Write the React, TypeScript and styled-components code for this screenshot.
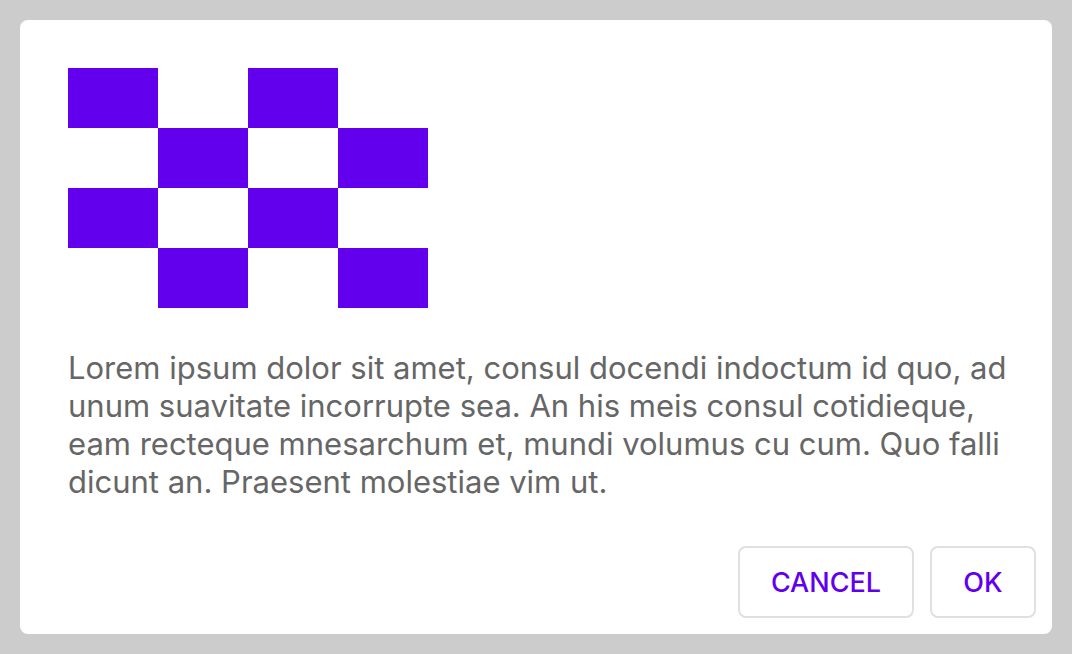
import React from "react";
import styled, { createGlobalStyle } from "styled-components";

const GlobalStyle = createGlobalStyle`
  *, *::before, *::after { box-sizing: border-box; }
  body { margin: 0; background: #cccccc; font-family: Inter, "Liberation Sans", sans-serif; }
`;

const Backdrop = styled.div`
  display: flex;
  flex-direction: column;
  justify-content: center;
  min-height: 100vh;
  padding: 20px;
`;

const Dialog = styled.section`
  background: #ffffff;
  border-radius: 8px;
`;

const Content = styled.div`
  padding: 48px 40px 45px 48px;
`;

const Pattern = styled.svg`
  display: block;
  width: 360px;
  height: 240px;
`;

const Message = styled.p`
  margin: 41px 0 0;
  color: #666666;
  font-size: 31px;
  line-height: 38px;
`;

const Actions = styled.footer`
  display: flex;
  justify-content: flex-end;
  gap: 16px;
  padding: 0 16px 16px;
`;

const ActionButton = styled.button`
  min-width: 106px;
  height: 72px;
  padding: 0 31px;
  border: 2px solid #e0e0e0;
  border-radius: 8px;
  background: #ffffff;
  color: #6200ee;
  font: 500 27px Inter, "Liberation Sans", sans-serif;
  text-transform: uppercase;
  cursor: pointer;
`;

const columns = [0, 1, 2, 3];

export default function App() {
  return (
    <>
      <GlobalStyle />
      <Backdrop>
        <Dialog role="dialog" aria-modal="true" aria-describedby="message">
          <Content>
            <Pattern viewBox="0 0 360 240" fill="#6200ee" shapeRendering="crispEdges" aria-hidden="true">
              {columns.flatMap((column) =>
                [0, 2].map((row) => (
                  <rect key={`${column}-${row}`} x={column * 90} y={(row + (column % 2)) * 60} width="90" height="60" />
                ))
              )}
            </Pattern>
            <Message id="message">
              Lorem ipsum dolor sit amet, consul docendi indoctum id quo, ad unum suavitate incorrupte sea. An his meis
              consul cotidieque, eam recteque mnesarchum et, mundi volumus cu cum. Quo falli dicunt an. Praesent
              molestiae vim ut.
            </Message>
          </Content>
          <Actions>
            <ActionButton type="button">Cancel</ActionButton>
            <ActionButton type="button">OK</ActionButton>
          </Actions>
        </Dialog>
      </Backdrop>
    </>
  );
}
